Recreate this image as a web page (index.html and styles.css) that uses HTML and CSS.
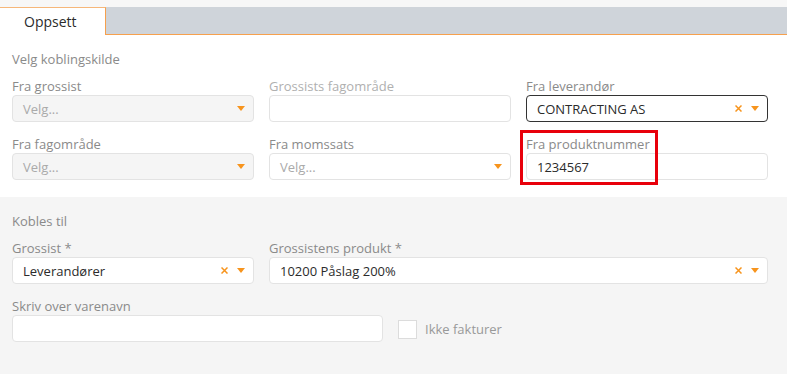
FILE: index.html
```html
<!DOCTYPE html>
<html lang="no">
<head>
<meta charset="utf-8">
<link rel="stylesheet" href="styles.css">
</head>
<body>
<div class="topstrip"></div>
<div class="tabbar">
  <div class="tab">Oppsett</div>
  <div class="tabfill"></div>
</div>

<section class="sec sec-white">
  <div class="title">Velg koblingskilde</div>
  <div class="grid">
    <div class="field">
      <div class="label">Fra grossist</div>
      <div class="input disabled"><span class="ph">Velg...</span><span class="icons"><span class="arrow"></span></span></div>
    </div>
    <div class="field">
      <div class="label light">Grossists fagområde</div>
      <div class="input"></div>
    </div>
    <div class="field">
      <div class="label">Fra leverandør</div>
      <div class="input focus"><span class="val">CONTRACTING AS</span><span class="icons"><svg class="x" width="7" height="7" viewBox="0 0 7 7"><path d="M0.5 0.5L6.5 6.5M6.5 0.5L0.5 6.5"/></svg><span class="arrow"></span></span></div>
    </div>
    <div class="field">
      <div class="label">Fra fagområde</div>
      <div class="input disabled"><span class="ph">Velg...</span><span class="icons"><span class="arrow"></span></span></div>
    </div>
    <div class="field">
      <div class="label">Fra momssats</div>
      <div class="input"><span class="ph">Velg...</span><span class="icons"><span class="arrow"></span></span></div>
    </div>
    <div class="field hl-wrap">
      <div class="label">Fra produktnummer</div>
      <div class="input"><span class="val">1234567</span></div>
      <div class="highlight"></div>
    </div>
  </div>
</section>

<section class="sec sec-gray">
  <div class="title">Kobles til</div>
  <div class="grid">
    <div class="field">
      <div class="label">Grossist *</div>
      <div class="input"><span class="val">Leverandører</span><span class="icons"><svg class="x" width="7" height="7" viewBox="0 0 7 7"><path d="M0.5 0.5L6.5 6.5M6.5 0.5L0.5 6.5"/></svg><span class="arrow"></span></span></div>
    </div>
    <div class="field span2">
      <div class="label">Grossistens produkt *</div>
      <div class="input"><span class="val">10200 Påslag 200%</span><span class="icons"><svg class="x" width="7" height="7" viewBox="0 0 7 7"><path d="M0.5 0.5L6.5 6.5M6.5 0.5L0.5 6.5"/></svg><span class="arrow"></span></span></div>
    </div>
  </div>
  <div class="row-last">
    <div class="field wide">
      <div class="label">Skriv over varenavn</div>
      <div class="input"></div>
    </div>
    <label class="check"><span class="box"></span><span class="check-text">Ikke fakturer</span></label>
  </div>
</section>
</body>
</html>
```

FILE: styles.css
```css
* { box-sizing: border-box; }
html, body { margin: 0; padding: 0; }
body {
  font-family: "Open Sans", "Noto Sans", sans-serif;
  font-size: 13px;
  color: #333;
  background: #f5f5f5;
  width: 787px;
  height: 374px;
  overflow: hidden;
}
.topstrip { height: 7px; background: #f7f7f7; }
.tabbar { display: flex; height: 28px; }
.tab {
  width: 106px;
  background: #fff;
  border-top: 1px solid #f6b77a;
  border-right: 1px solid #f6a04d;
  font-size: 14px;
  color: #2b2b2b;
  padding-left: 24px;
  line-height: 27px;
}
.tabfill {
  flex: 1;
  background: #cfd4da;
  border-bottom: 1px solid #f6a04d;
}
.sec { padding: 14px 19px 0 12px; }
.sec-white { background: #fff; height: 162px; }
.sec-gray { background: #f5f5f5; height: 177px; }
.title { line-height: 20px; color: #8a8a8a; margin-bottom: 8px; }
.grid {
  display: grid;
  grid-template-columns: 242px 242px 242px;
  column-gap: 15px;
  row-gap: 13px;
}
.field { display: flex; flex-direction: column; }
.span2 { grid-column: span 2; }
.label { line-height: 18px; color: #8a8a8a; }
.label.light { color: #b0b0b0; }
.input {
  height: 27px;
  border: 1px solid #e3e3e3;
  border-radius: 4px;
  background: #fff;
  display: flex;
  align-items: center;
  padding: 0 8px 0 10px;
}
.input.disabled { background: #f5f5f5; }
.input.focus { border-color: #333; }
.ph { color: #aaa; flex: 1; }
.val { color: #2b2b2b; flex: 1; }
.icons { display: flex; align-items: center; gap: 9px; margin-left: auto; }
.x { display: block; stroke: #f7941d; stroke-width: 1.5; fill: none; }
.arrow {
  width: 0; height: 0;
  border-left: 4px solid transparent;
  border-right: 4px solid transparent;
  border-top: 5px solid #f7941d;
}
.hl-wrap { position: relative; }
.highlight {
  position: absolute;
  left: -6px;
  top: -5px;
  width: 138px;
  height: 55px;
  border: 3px solid #e8000b;
}
.row-last { display: flex; align-items: flex-end; margin-top: 13px; }
.wide { width: 371px; }
.check { display: flex; align-items: center; height: 27px; margin-left: 15px; }
.box {
  width: 19px; height: 19px;
  border: 1px solid #dcdcdc;
  background: #fff;
  margin-top: 2px;
}
.check-text { color: #999; margin-left: 8px; }
```
